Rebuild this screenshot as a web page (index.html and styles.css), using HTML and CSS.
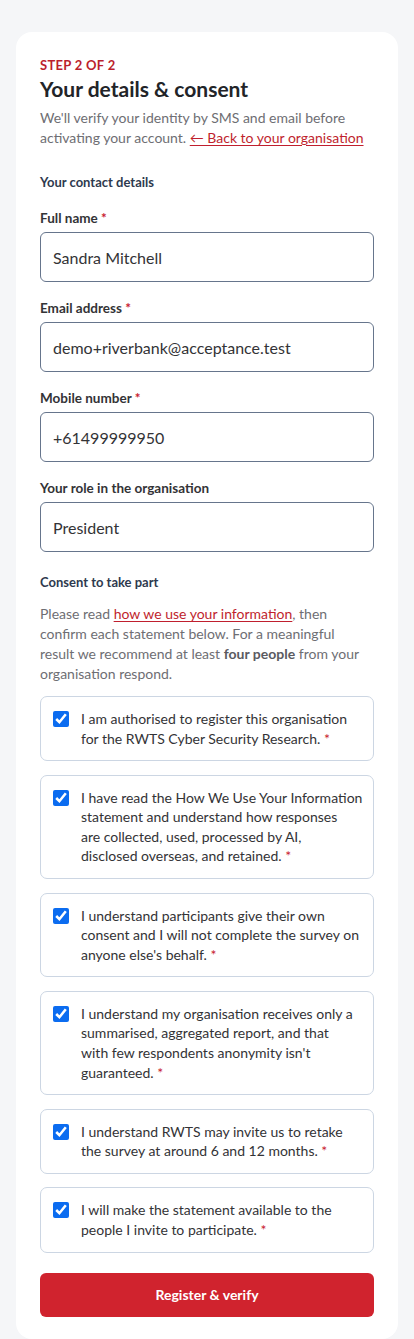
FILE: index.html
```html
<!DOCTYPE html>
<html lang="en">
<head>
<meta charset="utf-8">
<meta name="viewport" content="width=device-width, initial-scale=1">
<title>Your details &amp; consent</title>
<link rel="stylesheet" href="styles.css">
</head>
<body>
<main class="card">
  <p class="step">STEP 2 OF 2</p>
  <h1 class="title">Your details &amp; consent</h1>
  <p class="intro">We'll verify your identity by SMS and email before activating your account. <a class="link" href="#">← Back to your organisation</a></p>

  <h2 class="section">Your contact details</h2>
  <div class="fields">
    <div class="field">
      <label class="label">Full name <span class="req">*</span></label>
      <input class="input" type="text" value="Sandra Mitchell">
    </div>
    <div class="field">
      <label class="label">Email address <span class="req">*</span></label>
      <input class="input" type="text" value="demo+riverbank@acceptance.test">
    </div>
    <div class="field">
      <label class="label">Mobile number <span class="req">*</span></label>
      <input class="input" type="text" value="+61499999950">
    </div>
    <div class="field">
      <label class="label">Your role in the organisation</label>
      <input class="input" type="text" value="President">
    </div>
  </div>

  <h2 class="section section-consent">Consent to take part</h2>
  <p class="consent-intro">Please read <a class="link" href="#">how we use your information</a>, then<br>confirm each statement below. For a meaningful<br>result we recommend at least <strong>four people</strong> from your<br>organisation respond.</p>

  <div class="checks">
    <label class="check"><input class="box" type="checkbox" checked><span class="check-text">I am authorised to register this organisation<br>for the RWTS Cyber Security Research. <span class="req">*</span></span></label>
    <label class="check"><input class="box" type="checkbox" checked><span class="check-text">I have read the How We Use Your Information<br>statement and understand how responses<br>are collected, used, processed by AI,<br>disclosed overseas, and retained. <span class="req">*</span></span></label>
    <label class="check"><input class="box" type="checkbox" checked><span class="check-text">I understand participants give their own<br>consent and I will not complete the survey on<br>anyone else's behalf. <span class="req">*</span></span></label>
    <label class="check"><input class="box" type="checkbox" checked><span class="check-text">I understand my organisation receives only a<br>summarised, aggregated report, and that<br>with few respondents anonymity isn't<br>guaranteed. <span class="req">*</span></span></label>
    <label class="check"><input class="box" type="checkbox" checked><span class="check-text">I understand RWTS may invite us to retake<br>the survey at around 6 and 12 months. <span class="req">*</span></span></label>
    <label class="check"><input class="box" type="checkbox" checked><span class="check-text">I will make the statement available to the<br>people I invite to participate. <span class="req">*</span></span></label>
  </div>

  <button class="submit" type="button">Register &amp; verify</button>
</main>
</body>
</html>
```

FILE: styles.css
```css
* { box-sizing: border-box; }

body {
  margin: 0;
  padding: 32px 16px 0;
  background: #f5f6f8;
  font-family: Lato, "Noto Sans", sans-serif;
  color: #2f2f33;
}

.card {
  background: #ffffff;
  border-radius: 16px;
  padding: 24px 24px 22px;
}

.step {
  margin: 0;
  font-size: 13px;
  line-height: 18px;
  font-weight: 700;
  letter-spacing: 0.3px;
  color: #bb1f2d;
}

.title {
  margin: 1px 0 0;
  font-size: 21px;
  line-height: 28px;
  font-weight: 700;
  color: #222428;
}

.intro {
  margin: 5px 0 0;
  font-size: 14px;
  line-height: 20px;
  color: #6e6e73;
}

.link {
  color: #c01f2e;
  text-decoration: underline;
  text-underline-offset: 2px;
}

.section {
  margin: 25px 0 0;
  font-size: 13px;
  line-height: 18px;
  font-weight: 700;
  color: #2e3a4e;
}

.fields {
  margin-top: 18px;
  display: flex;
  flex-direction: column;
  gap: 17px;
}

.field {
  display: flex;
  flex-direction: column;
  gap: 5px;
}

.label {
  font-size: 13.5px;
  line-height: 18px;
  font-weight: 700;
  color: #333336;
}

.req {
  color: #c8202e;
}

.input {
  display: block;
  width: 100%;
  height: 50px;
  padding: 0 12px;
  border: 1px solid #66758c;
  border-radius: 6px;
  font-family: inherit;
  font-size: 16px;
  color: #333336;
  background: #fff;
}

.section-consent {
  margin-top: 21px;
}

.consent-intro {
  margin: 13px 0 0;
  font-size: 14px;
  line-height: 20px;
  color: #6e6e73;
  white-space: nowrap;
}

.consent-intro strong {
  color: #5a5a5f;
}

.checks {
  margin-top: 12px;
  display: flex;
  flex-direction: column;
  gap: 13.5px;
}

.check {
  display: flex;
  align-items: flex-start;
  gap: 12px;
  padding: 12px;
  border: 1px solid #ccd6e3;
  border-radius: 7px;
  font-size: 14px;
  line-height: 1.4;
  color: #333336;
}

.check-text {
  white-space: nowrap;
}

.box {
  flex: none;
  width: 16px;
  height: 16px;
  margin: 2px 0 0;
  accent-color: #0b6cf0;
}

.submit {
  display: block;
  width: 100%;
  height: 44px;
  margin-top: 20px;
  border: 0;
  border-radius: 6px;
  background: #d0232e;
  color: #fff;
  font-family: inherit;
  font-size: 14px;
  font-weight: 700;
}
```
